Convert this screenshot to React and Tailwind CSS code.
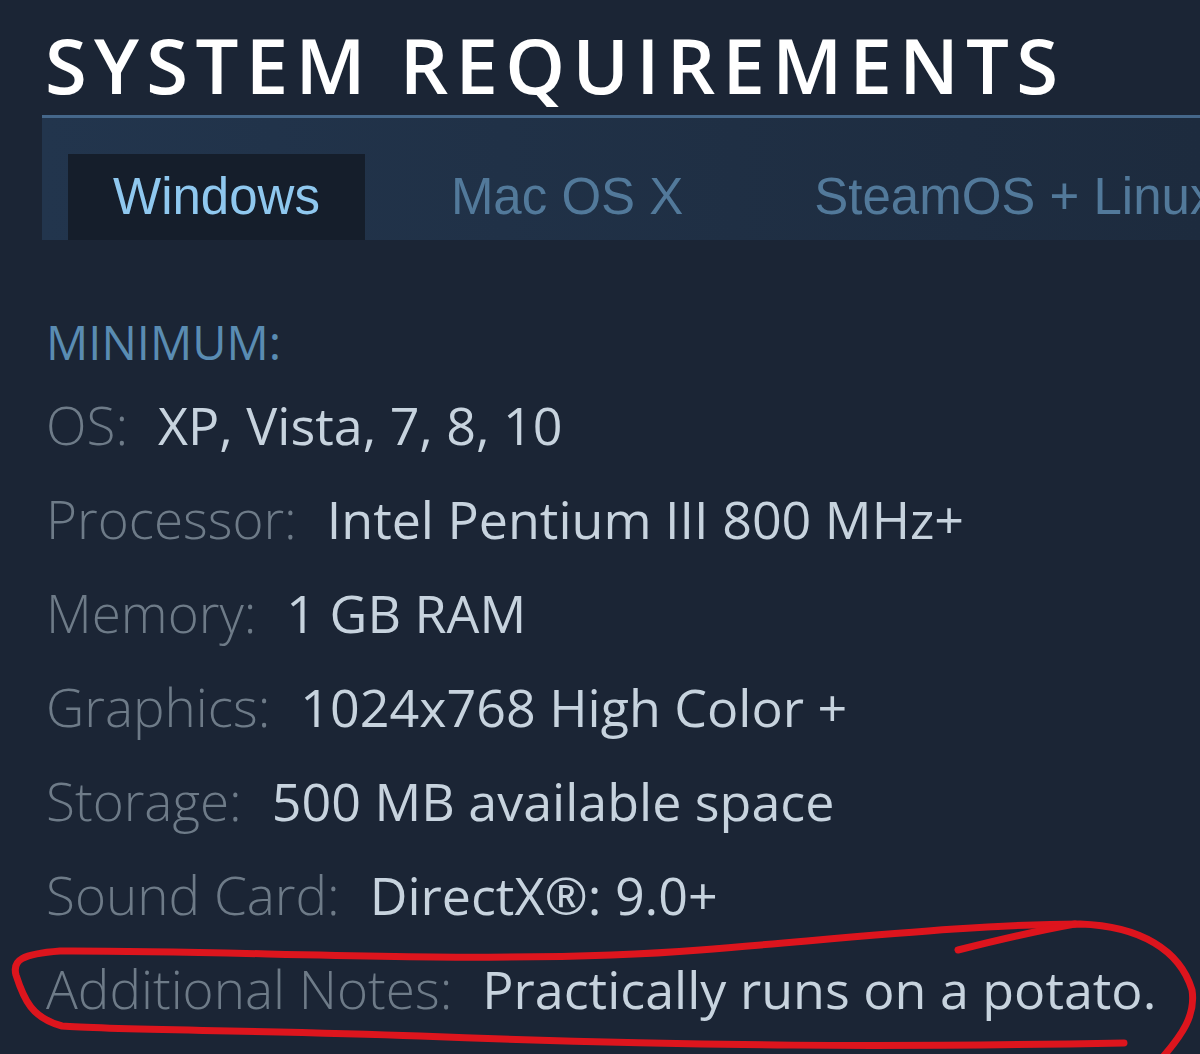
import React from 'react'

const TABS = ['Windows', 'Mac OS X', 'SteamOS + Linux']

const SPECS = [
  { label: 'OS:', value: 'XP, Vista, 7, 8, 10' },
  { label: 'Processor:', value: 'Intel Pentium III 800 MHz+' },
  { label: 'Memory:', value: '1 GB RAM' },
  { label: 'Graphics:', value: '1024x768 High Color +' },
  { label: 'Storage:', value: '500 MB available space' },
  { label: 'Sound Card:', value: 'DirectX®: 9.0+' },
  { label: 'Additional Notes:', value: 'Practically runs on a potato.' },
]

// hand-drawn red circle around the last row
function Scribble() {
  return (
    <svg className="absolute inset-0 pointer-events-none" width="1200" height="1054" viewBox="0 0 1200 1054">
      <g fill="none" stroke="#e8141c" strokeWidth="7" strokeLinecap="round" strokeLinejoin="round" opacity="0.95">
        <path d="M1124 1043 C 900 1047, 700 1047, 420 1036 C 250 1030, 110 1030, 62 1026 C 32 1018, 24 1000, 16 975 C 12 960, 22 954, 60 951 C 250 950, 500 966, 700 950 C 850 938, 980 924, 1080 924 C 1140 926, 1180 950, 1192 990 C 1196 1015, 1182 1035, 1162 1058" />
        <path d="M958 950 C 990 942, 1030 932, 1075 924" />
      </g>
    </svg>
  )
}

export default function App() {
  return (
    <div className="relative w-[1200px] h-[1054px] overflow-hidden bg-[#1b2535]" style={{ fontFamily: '"Open Sans", "Noto Sans", sans-serif' }}>
      <div className="pl-[42px]">
        <h1 className="pl-[3px] pt-[27px] h-[115px] text-[76px] leading-[76px] font-semibold tracking-[7.3px] text-white">
          SYSTEM REQUIREMENTS
        </h1>
        <div className="h-[3px] bg-[#45678a]" />
        <div className="h-[122px] pt-[36px] pl-[26px] flex gap-[41px] bg-gradient-to-r from-[#22354d] to-[#1d2b3e]">
          {TABS.map((t, i) => (
            <div key={t}
              className={`px-[45px] flex items-center whitespace-nowrap text-[51px] ${i === 0 ? 'bg-[#151e2b] text-[#8fc8ef]' : 'text-[#52799a]'}`}
              style={{ fontFamily: '"Liberation Sans", Arial, sans-serif' }}>
              {t}
            </div>
          ))}
        </div>

        <div className="pl-[4px] pt-[72px]">
          <p className="text-[47px] leading-[60px] text-[#5a8cb2]">MINIMUM:</p>
          <ul className="mt-[6px]">
            {SPECS.map(s => (
              <li key={s.label} className="flex items-baseline whitespace-nowrap h-[94px] leading-[93px]">
                <span className="text-[53px] leading-[93px] font-light text-[#6e7b88]">{s.label}</span>
                <span className="ml-[30px] text-[52px] leading-[93px] font-medium text-[#c7d3de]">{s.value}</span>
              </li>
            ))}
          </ul>
        </div>
      </div>
      <Scribble />
    </div>
  )
}
